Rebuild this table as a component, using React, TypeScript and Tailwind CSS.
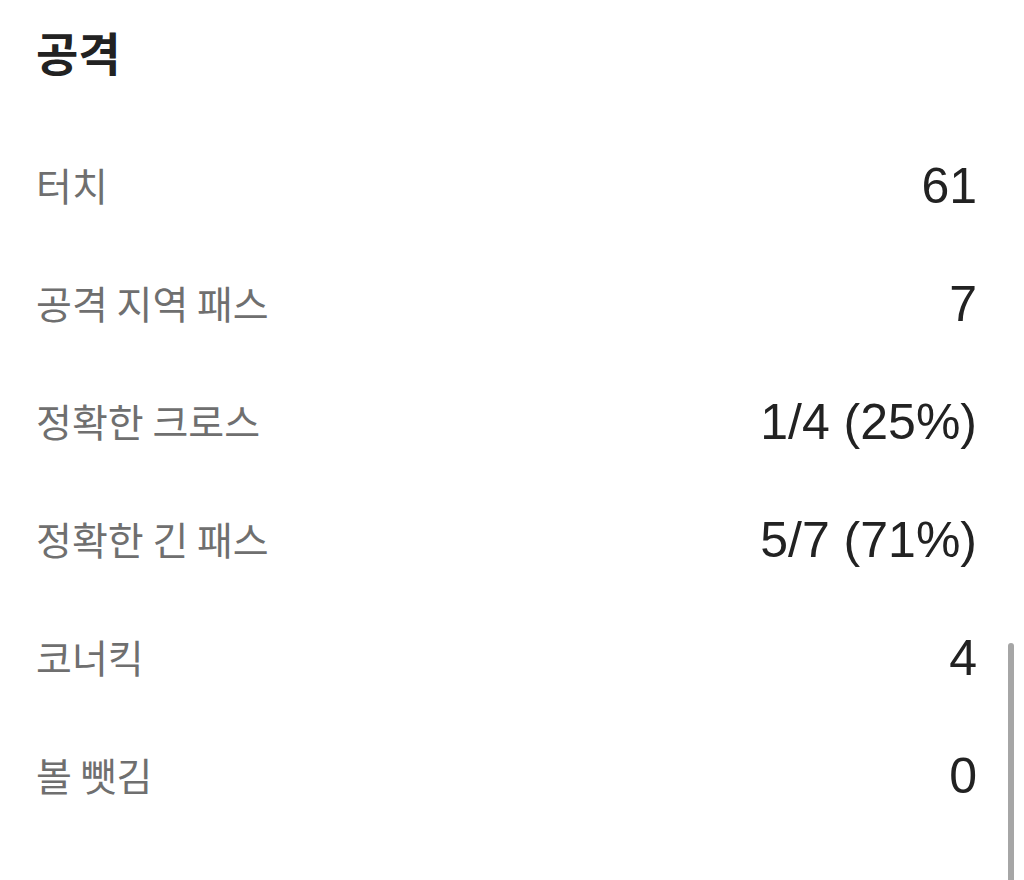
import React from "react";

const rows: { label: string; value: string }[] = [
  { label: "터치", value: "61" },
  { label: "공격 지역 패스", value: "7" },
  { label: "정확한 크로스", value: "1/4 (25%)" },
  { label: "정확한 긴 패스", value: "5/7 (71%)" },
  { label: "코너킥", value: "4" },
  { label: "볼 뺏김", value: "0" },
];

export default function App() {
  return (
    <div className="relative w-[1024px] h-[880px] overflow-hidden bg-white">
      <div className="pl-[36px] pr-[47px]">
        <div className="h-[104px] flex items-center">
          <h2
            className="text-[46px] font-bold text-[#222222] leading-none -mt-[3px]"
            style={{ fontFamily: '"Noto Sans CJK KR", "Noto Sans", sans-serif' }}
          >
            공격
          </h2>
        </div>
        <ul className="pt-[23px]">
          {rows.map((r) => (
            <li key={r.label} className="h-[118px] flex items-center justify-between">
              <span
                className="text-[39px] text-[#6f6f6f] leading-none -mt-[4px]"
                style={{ fontFamily: '"Noto Sans CJK KR", "Noto Sans", sans-serif' }}
              >
                {r.label}
              </span>
              <span
                className="text-[50px] text-[#222222] leading-none"
                style={{ fontFamily: '"Liberation Sans", Arial, sans-serif' }}
              >
                {r.value}
              </span>
            </li>
          ))}
        </ul>
      </div>
      <div className="absolute left-[1008px] top-[643px] w-[6px] h-[260px] rounded-full bg-[#a6a6a6]" />
    </div>
  );
}
